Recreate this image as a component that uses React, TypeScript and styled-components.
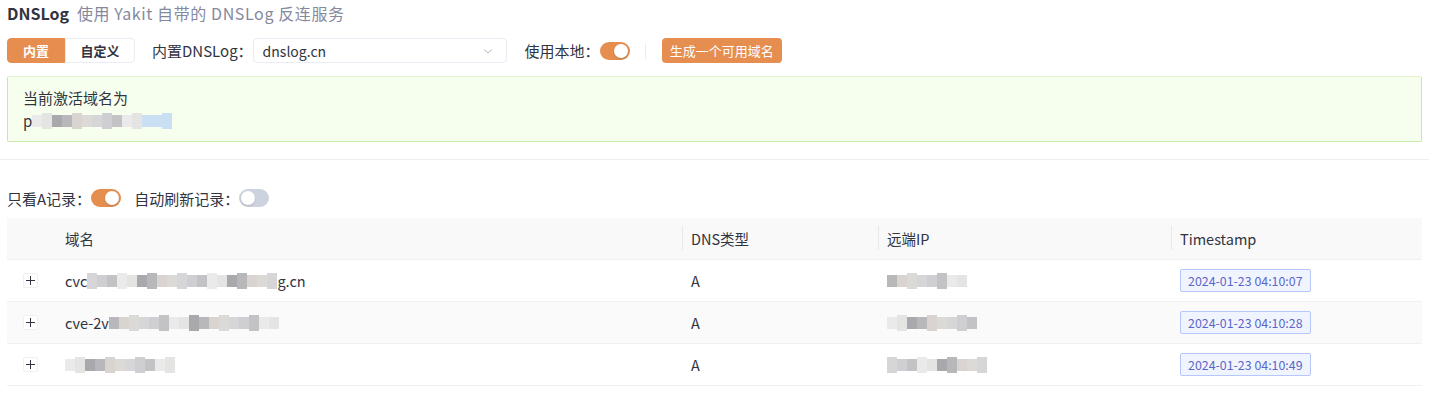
import styled, { createGlobalStyle } from "styled-components";

const GlobalStyle = createGlobalStyle`
    body {
        margin: 0;
        background: #fff;
        font-family: "Noto Sans CJK SC", "Noto Sans", "Liberation Sans", sans-serif;
        color: #31343f;
    }
`;

const orange = "#e58e50";

const Page = styled.div`
    width: 1415px;
    padding: 0 25px 0 7px;
    display: flex;
    flex-direction: column;
`;

const Header = styled.div`
    height: 26px;
    display: flex;
    align-items: center;
    gap: 8px;
`;

const Title = styled.span`
    font-size: 16px;
    font-weight: 700;
    color: #31343f;
`;

const SubTitle = styled.span`
    font-size: 16px;
    letter-spacing: 0.6px;
    color: #85899e;
`;

const Toolbar = styled.div`
    margin-top: 12px;
    height: 25px;
    display: flex;
    align-items: center;
`;

const Segmented = styled.div`
    display: flex;
    height: 25px;
`;

const SegButton = styled.div<{ $active?: boolean }>`
    display: flex;
    align-items: center;
    justify-content: center;
    font-size: 13px;
    font-weight: 700;
    box-sizing: border-box;
    width: ${p => (p.$active ? "58px" : "70px")};
    color: ${p => (p.$active ? "#fff" : "#31343f")};
    background: ${p => (p.$active ? orange : "#fff")};
    border: 1px solid ${p => (p.$active ? orange : "#eaecf3")};
    border-radius: ${p => (p.$active ? "4px 0 0 4px" : "0 4px 4px 0")};
`;

const Label = styled.span<{ $ml?: number }>`
    font-size: 15px;
    color: #31343f;
    margin-left: ${p => p.$ml ?? 0}px;
`;

const Select = styled.div`
    box-sizing: border-box;
    width: 254px;
    height: 25px;
    border: 1px solid #eaecf3;
    border-radius: 4px;
    padding: 0 12px 0 9px;
    display: flex;
    align-items: center;
    justify-content: space-between;
    font-size: 14px;
    color: #31343f;
`;

const Switch = styled.div<{ $on?: boolean }>`
    box-sizing: border-box;
    width: 30px;
    height: 18px;
    border-radius: 9px;
    padding: 2px;
    display: flex;
    justify-content: ${p => (p.$on ? "flex-end" : "flex-start")};
    background: ${p => (p.$on ? orange : "#ccd2de")};
    &::after {
        content: "";
        width: 14px;
        height: 14px;
        border-radius: 50%;
        background: #fff;
        box-shadow: 0 1px 2px rgba(0, 0, 0, 0.15);
    }
`;

const VDivider = styled.div`
    width: 1px;
    height: 16px;
    background: #eaecf3;
    margin: 0 16px 0 15px;
`;

const PrimaryButton = styled.div`
    height: 25px;
    padding: 0 8px;
    display: flex;
    align-items: center;
    border-radius: 4px;
    background: ${orange};
    color: #fff;
    font-size: 13px;
`;

const Alert = styled.div`
    margin-top: 13px;
    height: 66px;
    box-sizing: border-box;
    background: #f6ffed;
    border: 1px solid #c9e9a8;
    border-top-color: #e2f5cf;
    border-radius: 2px;
    padding: 11px 15px;
    display: flex;
    flex-direction: column;
    justify-content: center;
    gap: 3px;
    font-size: 15px;
    line-height: 20px;
    color: #31343f;
`;

const HDivider = styled.div`
    height: 1px;
    background: #eeeeee;
    margin: 17px -7px 0;
`;

const FilterRow = styled.div`
    margin-top: 28px;
    height: 20px;
    display: flex;
    align-items: center;
`;

const Table = styled.div`
    margin-top: 10px;
    display: flex;
    flex-direction: column;
`;

const cols = "49px 626px 196px 293px 1fr";

const HeadRow = styled.div`
    display: grid;
    grid-template-columns: ${cols};
    height: 41px;
    background: #f9f9fa;
    border-bottom: 1px solid #f0f0f0;
    font-size: 14.5px;
    color: #31343f;
`;

const HeadCell = styled.div<{ $sep?: boolean }>`
    display: flex;
    align-items: center;
    padding-left: 9px;
    position: relative;
    &::before {
        content: "";
        display: ${p => (p.$sep ? "block" : "none")};
        position: absolute;
        left: 0;
        top: 8px;
        width: 1px;
        height: 24px;
        background: #e8e8ec;
    }
`;

const Row = styled.div<{ $striped?: boolean }>`
    display: grid;
    grid-template-columns: ${cols};
    height: 41px;
    border-bottom: 1px solid #f0f0f0;
    background: ${p => (p.$striped ? "#fafafa" : "#fff")};
    font-size: 14.5px;
    color: #31343f;
`;

const Cell = styled.div`
    display: flex;
    align-items: center;
    padding-left: 9px;
    overflow: hidden;
    white-space: nowrap;
`;

const ExpandCell = styled.div`
    display: flex;
    align-items: center;
    padding-left: 16px;
`;

const ExpandBtn = styled.div`
    width: 15px;
    height: 15px;
    box-sizing: border-box;
    border: 1px solid #f0f0f0;
    border-radius: 2px;
    background: #fff;
    display: flex;
    align-items: center;
    justify-content: center;
`;

const Tag = styled.span`
    display: inline-flex;
    align-items: center;
    height: 23px;
    padding: 0 7px;
    box-sizing: border-box;
    border: 1px solid #b7c6fb;
    border-radius: 2px;
    background: #f0f4ff;
    color: #5b66c8;
    font-size: 12.4px;
`;

const MosaicWrap = styled.span`
    display: inline-flex;
    align-items: center;
`;

const Block = styled.span<{ $c: string; $h: number }>`
    display: inline-block;
    width: 10px;
    height: ${p => p.$h}px;
    background: ${p => p.$c};
`;

const greys = ["#d6d6d8", "#c3c3c6", "#e4e4e2", "#b8b8bb", "#dcdad6", "#cfcfd3", "#eaeaea", "#a9a9ad", "#d9d4cf"];

function Mosaic({ n, seed = 0, tint }: { n: number; seed?: number; tint?: string }) {
    const blocks = [];
    for (let i = 0; i < n; i++) {
        const c = tint && i >= n - 3 ? tint : greys[(i * 5 + seed * 3) % greys.length];
        const h = (i + seed) % 3 === 0 ? 16 : 12;
        blocks.push(<Block key={i} $c={c} $h={h} />);
    }
    return <MosaicWrap>{blocks}</MosaicWrap>;
}

function Chevron() {
    return (
        <svg width="12" height="12" viewBox="0 0 12 12" fill="none">
            <path d="M2 4.5 L6 8 L10 4.5" stroke="#b4b8c6" strokeWidth="1" />
        </svg>
    );
}

function Plus() {
    return (
        <svg width="11" height="11" viewBox="0 0 11 11">
            <path d="M5.5 1 V10 M1 5.5 H10" stroke="#31343f" strokeWidth="1" />
        </svg>
    );
}

const rows = [
    { pre: "cvc", n: 19, post: "g.cn", ip: 8, ts: "2024-01-23 04:10:07" },
    { pre: "cve-2v", n: 17, post: "", ip: 9, ts: "2024-01-23 04:10:28" },
    { pre: "", n: 11, post: "", ip: 10, ts: "2024-01-23 04:10:49" },
];

export default function App() {
    return (
        <>
            <GlobalStyle />
            <Page>
                <Header>
                    <Title>DNSLog</Title>
                    <SubTitle>使用 Yakit 自带的 DNSLog 反连服务</SubTitle>
                </Header>
                <Toolbar>
                    <Segmented>
                        <SegButton $active>内置</SegButton>
                        <SegButton>自定义</SegButton>
                    </Segmented>
                    <Label $ml={17}>内置DNSLog：</Label>
                    <Select>
                        <span>dnslog.cn</span>
                        <Chevron />
                    </Select>
                    <Label $ml={18}>使用本地：</Label>
                    <Switch $on />
                    <VDivider />
                    <PrimaryButton>生成一个可用域名</PrimaryButton>
                </Toolbar>
                <Alert>
                    <div>当前激活域名为</div>
                    <div>
                        p<Mosaic n={14} seed={2} tint="#c9dff4" />
                    </div>
                </Alert>
                <HDivider />
                <FilterRow>
                    <Label>只看A记录：</Label>
                    <Switch $on />
                    <Label $ml={13}>自动刷新记录：</Label>
                    <Switch />
                </FilterRow>
                <Table>
                    <HeadRow>
                        <HeadCell />
                        <HeadCell>域名</HeadCell>
                        <HeadCell $sep>DNS类型</HeadCell>
                        <HeadCell $sep>远端IP</HeadCell>
                        <HeadCell $sep>Timestamp</HeadCell>
                    </HeadRow>
                    {rows.map((r, i) => (
                        <Row key={r.ts} $striped={i === 1}>
                            <ExpandCell>
                                <ExpandBtn>
                                    <Plus />
                                </ExpandBtn>
                            </ExpandCell>
                            <Cell>
                                {r.pre}
                                <Mosaic n={r.n} seed={i} />
                                {r.post}
                            </Cell>
                            <Cell>A</Cell>
                            <Cell>
                                <Mosaic n={r.ip} seed={i + 4} />
                            </Cell>
                            <Cell>
                                <Tag>{r.ts}</Tag>
                            </Cell>
                        </Row>
                    ))}
                </Table>
            </Page>
        </>
    );
}
